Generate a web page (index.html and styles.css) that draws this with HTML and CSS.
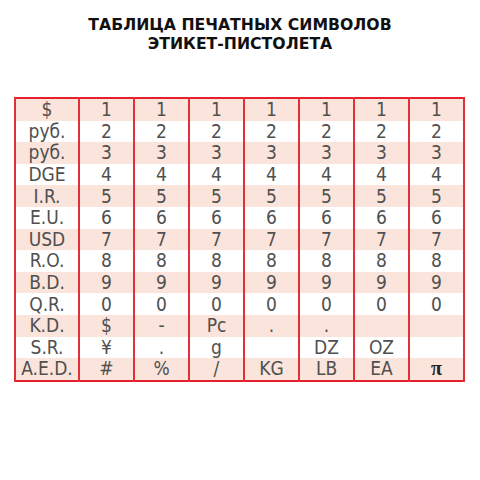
FILE: index.html
```html
<!DOCTYPE html>
<html lang="ru">
<head>
<meta charset="utf-8">
<link rel="stylesheet" href="styles.css">
</head>
<body>
<div class="page">
  <h1 class="title">ТАБЛИЦА ПЕЧАТНЫХ СИМВОЛОВ<br>ЭТИКЕТ-ПИСТОЛЕТА</h1>
  <table class="grid">
    <colgroup><col class="c0"><col><col><col><col><col><col><col></colgroup>
    <tbody>
      <tr class="odd"><td>$</td><td>1</td><td>1</td><td>1</td><td>1</td><td>1</td><td>1</td><td>1</td></tr>
      <tr><td>руб.</td><td>2</td><td>2</td><td>2</td><td>2</td><td>2</td><td>2</td><td>2</td></tr>
      <tr class="odd"><td>руб.</td><td>3</td><td>3</td><td>3</td><td>3</td><td>3</td><td>3</td><td>3</td></tr>
      <tr><td>DGE</td><td>4</td><td>4</td><td>4</td><td>4</td><td>4</td><td>4</td><td>4</td></tr>
      <tr class="odd"><td>I.R.</td><td>5</td><td>5</td><td>5</td><td>5</td><td>5</td><td>5</td><td>5</td></tr>
      <tr><td>E.U.</td><td>6</td><td>6</td><td>6</td><td>6</td><td>6</td><td>6</td><td>6</td></tr>
      <tr class="odd"><td>USD</td><td>7</td><td>7</td><td>7</td><td>7</td><td>7</td><td>7</td><td>7</td></tr>
      <tr><td>R.O.</td><td>8</td><td>8</td><td>8</td><td>8</td><td>8</td><td>8</td><td>8</td></tr>
      <tr class="odd"><td>B.D.</td><td>9</td><td>9</td><td>9</td><td>9</td><td>9</td><td>9</td><td>9</td></tr>
      <tr><td>Q.R.</td><td>0</td><td>0</td><td>0</td><td>0</td><td>0</td><td>0</td><td>0</td></tr>
      <tr class="odd"><td>K.D.</td><td>$</td><td>-</td><td>Pc</td><td>.</td><td>.</td><td></td><td></td></tr>
      <tr><td>S.R.</td><td class="yen">¥</td><td>.</td><td>g</td><td></td><td>DZ</td><td>OZ</td><td></td></tr>
      <tr class="odd"><td>A.E.D.</td><td>#</td><td>%</td><td>/</td><td>KG</td><td>LB</td><td>EA</td><td class="pi">π</td></tr>
    </tbody>
  </table>
</div>
</body>
</html>
```
FILE: styles.css
```css
html, body {
  margin: 0;
  padding: 0;
  background: #ffffff;
}
.page {
  width: 480px;
  height: 480px;
  display: flex;
  flex-direction: column;
  align-items: center;
}
.title {
  margin: 15px 0 0 0;
  font-family: "DejaVu Sans", sans-serif;
  font-weight: bold;
  font-size: 15.7px;
  line-height: 19px;
  text-align: center;
  color: #111111;
}
.grid {
  margin: 44px 0 0 -1px;
  width: 451px;
  table-layout: fixed;
  border-collapse: collapse;
  border: 2px solid #e3202b;
  font-family: "Liberation Sans Narrow", "DejaVu Sans Condensed", "DejaVu Sans", sans-serif;
  font-stretch: condensed;
  font-size: 19px;
  color: #505050;
}
.c0 { width: 64px; }
.grid td {
  height: 21.6px;
  padding: 0;
  line-height: 21px;
  text-align: center;
  border-left: 2px solid #e0303a;
  border-right: 2px solid #e0303a;
  white-space: nowrap;
  overflow: hidden;
}
.grid tr.odd td {
  background: #fbe4db;
}
.grid td.pi {
  font-family: "Liberation Serif", serif;
  font-weight: bold;
  font-size: 20px;
  color: #222222;
}
```
